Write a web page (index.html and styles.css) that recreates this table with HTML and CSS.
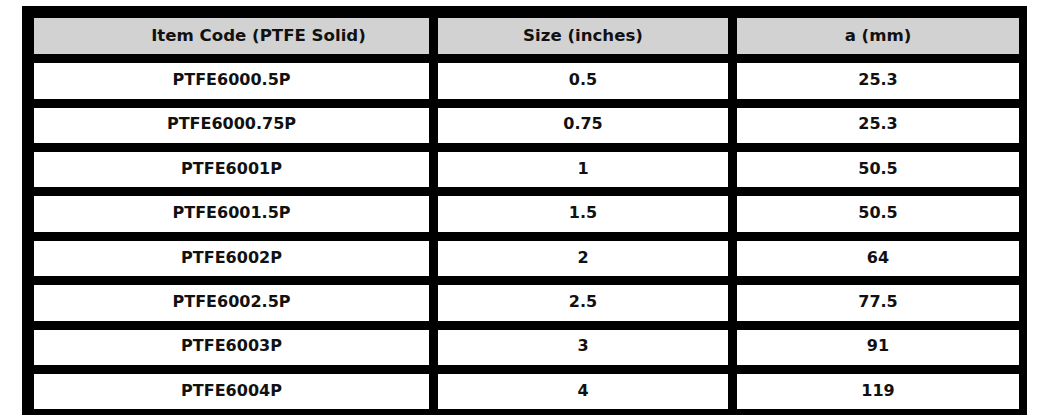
FILE: index.html
```html
<!DOCTYPE html>
<html lang="en">
<head>
<meta charset="utf-8">
<title>PTFE Solid</title>
<link rel="stylesheet" href="styles.css">
</head>
<body>
<div class="sheet">
  <div class="grid" role="table">
    <div class="cell head head-code" role="columnheader">Item Code (PTFE Solid)</div>
    <div class="cell head" role="columnheader">Size (inches)</div>
    <div class="cell head" role="columnheader">a (mm)</div>

    <div class="cell">PTFE6000.5P</div><div class="cell">0.5</div><div class="cell">25.3</div>
    <div class="cell">PTFE6000.75P</div><div class="cell">0.75</div><div class="cell">25.3</div>
    <div class="cell">PTFE6001P</div><div class="cell">1</div><div class="cell">50.5</div>
    <div class="cell">PTFE6001.5P</div><div class="cell">1.5</div><div class="cell">50.5</div>
    <div class="cell">PTFE6002P</div><div class="cell">2</div><div class="cell">64</div>
    <div class="cell">PTFE6002.5P</div><div class="cell">2.5</div><div class="cell">77.5</div>
    <div class="cell">PTFE6003P</div><div class="cell">3</div><div class="cell">91</div>
    <div class="cell">PTFE6004P</div><div class="cell">4</div><div class="cell">119</div>
  </div>
</div>
</body>
</html>
```
FILE: styles.css
```css
html, body {
  margin: 0;
  padding: 0;
  background: #ffffff;
  height: 415px;
  overflow: hidden;
}

.sheet {
  padding: 6px 0 0 22px;
}

.grid {
  width: 985px;
  display: grid;
  grid-template-columns: 395px 290px 282px;
  grid-template-rows: 36px repeat(8, 35.4px);
  column-gap: 9px;
  row-gap: 9px;
  padding: 12.3px 8px 12px 12px;
  background: #000000;
  font-family: "DejaVu Sans", Verdana, sans-serif;
  font-weight: bold;
  font-size: 16px;
  color: #111111;
}

.cell {
  background: #ffffff;
  display: flex;
  align-items: center;
  justify-content: center;
  padding-bottom: 3px;
  box-sizing: border-box;
  white-space: nowrap;
}

.head {
  background: #d2d2d2;
  font-size: 16.6px;
  padding-bottom: 2px;
}

.head-code {
  padding-left: 54px;
}
```
